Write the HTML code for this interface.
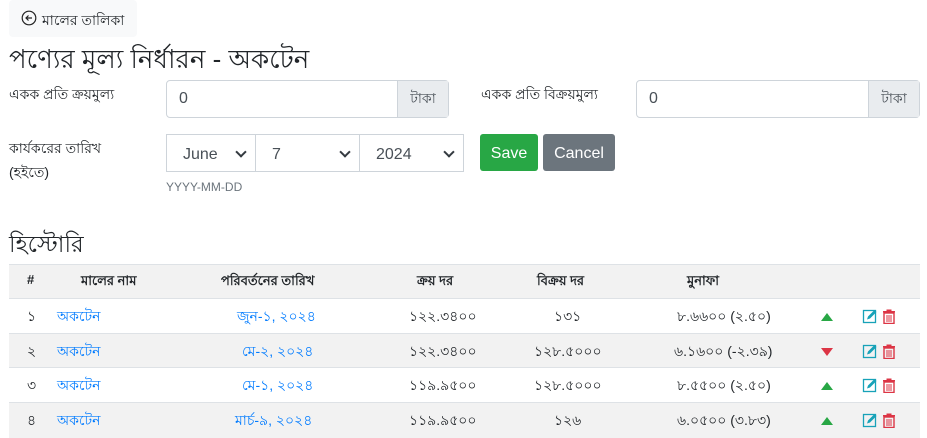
<!DOCTYPE html>
<html><head><meta charset="utf-8"><style>
body{margin:0;width:927px;height:437px;background:#fff;font-family:"Liberation Sans","Noto Sans CJK SC",sans-serif;color:#212529;position:relative;overflow:hidden}
.a{position:absolute;white-space:nowrap}
.back{left:9px;top:0;width:128px;height:37px;background:#f8f9fa;border-radius:4px}
.box{position:absolute;border:1px solid #ced4da;border-radius:4px;background:#fff;box-sizing:border-box;font-size:16px;color:#495057}
.addon{position:absolute;background:#e9ecef;border-left:1px solid #ced4da;top:0;bottom:0;right:0;font-size:14px;display:flex;align-items:center;justify-content:center}
.sel{position:absolute;border:1px solid #ced4da;box-sizing:border-box;height:38px;top:134px;font-size:16px;color:#495057;padding:11px 0 0 16px}
.sel:after{content:"";position:absolute;right:10px;top:13px;width:6px;height:6px;border-right:2px solid #343a40;border-bottom:2px solid #343a40;transform:rotate(45deg)}
.row{position:absolute;left:9px;width:911px;border-top:1px solid #dee2e6;font-size:14px}
.row div{position:absolute;top:6px;white-space:nowrap}
.blue{color:#007bff}
.up{width:0;height:0;border-left:6px solid transparent;border-right:6px solid transparent;border-bottom:8px solid #28a745;top:14px!important;left:812px}
.dn{width:0;height:0;border-left:6px solid transparent;border-right:6px solid transparent;border-top:8px solid #dc3545;top:14px!important;left:812px}
.ic{left:853px;top:9px!important}
</style></head><body>
<div class="a back"></div>
<svg class="a" style="left:21px;top:10px" width="16" height="16" viewBox="0 0 16 16"><circle cx="8" cy="8" r="6.8" fill="none" stroke="#222" stroke-width="1.2"/><path d="M11 8H5M7.5 5.5L5 8l2.5 2.5" fill="none" stroke="#222" stroke-width="1.2"/></svg>
<div class="a" style="left:42px;top:9px;font-size:14px">মালের তালিকা</div>
<div class="a" style="left:9px;top:39px;font-size:26px">পণ্যের মূল্য নির্ধারন - অকটেন</div>
<div class="a" style="left:9px;top:83px;font-size:14px">একক প্রতি ক্রয়মুল্য</div>
<div class="box" style="left:166px;top:80px;width:283px;height:38px"><span style="position:absolute;left:12px;top:9px">0</span><div class="addon" style="width:50px">টাকা</div></div>
<div class="a" style="left:481px;top:83px;font-size:14px">একক প্রতি বিক্রয়মুল্য</div>
<div class="box" style="left:636px;top:80px;width:284px;height:38px"><span style="position:absolute;left:12px;top:9px">0</span><div class="addon" style="width:50px">টাকা</div></div>
<div class="a" style="left:9px;top:136px;font-size:14px;line-height:24px">কার্যকরের তারিখ<br>(হইতে)</div>
<div class="sel" style="left:166px;width:90px">June</div>
<div class="sel" style="left:255px;width:105px;padding-left:16px">7</div>
<div class="sel" style="left:359px;width:105px">2024</div>
<div class="a" style="left:166px;top:180px;font-size:12px;color:#6c757d">YYYY-MM-DD</div>
<div class="a" style="left:480px;top:134px;width:58px;height:37px;background:#28a745;border-radius:3px;color:#fff;font-size:16px;text-align:center;line-height:39px">Save</div>
<div class="a" style="left:543px;top:134px;width:72px;height:37px;background:#6c757d;border-radius:3px;color:#fff;font-size:16px;text-align:center;line-height:39px">Cancel</div>
<div class="a" style="left:9px;top:226px;font-size:23px">হিস্টোরি</div>
<div class="a" style="left:9px;top:264px;width:911px;height:34px;background:#f2f2f2;border-top:1px solid #dee2e6"></div>
<div class="row" style="top:264px;border:none;font-weight:bold;font-size:13px">
<div style="left:18px;top:8px">#</div><div style="left:72px;top:8px">মালের নাম</div><div style="left:212px;top:8px">পরিবর্তনের তারিখ</div><div style="left:408px;top:8px">ক্রয় দর</div><div style="left:528px;top:8px">বিক্রয় দর</div><div style="left:678px;top:8px">মুনাফা</div></div>
<svg width="0" height="0" style="position:absolute"><defs>
<symbol id="ed" viewBox="0 0 16 16"><rect x="1.5" y="2.5" width="12" height="12" fill="none" stroke="#17a2b8" stroke-width="1.3"/><path d="M5 11.5l1-3 6.5-6.5 2 2L8 10.5z" fill="#17a2b8"/></symbol>
<symbol id="tr" viewBox="0 0 16 16"><path d="M5.5 1.5h5v1.5h3.5v1.5H2V3h3.5z" fill="#dc3545"/><rect x="3" y="5" width="10" height="10.5" fill="none" stroke="#dc3545" stroke-width="1.4"/><path d="M6 7v7M8 7v7M10 7v7" stroke="#dc3545" stroke-width="1"/></symbol></defs></svg>
<div class="row" style="top:298px;height:35px;background:#fff"><div style="left:18px">১</div><div class="blue" style="left:48px">অকটেন</div><div class="blue" style="left:228px">জুন-১, ২০২৪</div><div style="left:400px">১২২.৩৪০০</div><div style="left:545px">১৩১</div><div style="left:668px">৮.৬৬০০ (২.৫০)</div><div class="up"></div><div class="ic"><svg width="16" height="16"><use href="#ed"/></svg><svg width="16" height="16" style="margin-left:3px"><use href="#tr"/></svg></div></div>
<div class="row" style="top:333px;height:34px;background:#f2f2f2"><div style="left:18px">২</div><div class="blue" style="left:48px">অকটেন</div><div class="blue" style="left:233px">মে-২, ২০২৪</div><div style="left:400px">১২২.৩৪০০</div><div style="left:525px">১২৮.৫০০০</div><div style="left:665px">৬.১৬০০ (-২.৩৯)</div><div class="dn"></div><div class="ic"><svg width="16" height="16"><use href="#ed"/></svg><svg width="16" height="16" style="margin-left:3px"><use href="#tr"/></svg></div></div>
<div class="row" style="top:367px;height:35px;background:#fff"><div style="left:18px">৩</div><div class="blue" style="left:48px">অকটেন</div><div class="blue" style="left:233px">মে-১, ২০২৪</div><div style="left:400px">১১৯.৯৫০০</div><div style="left:525px">১২৮.৫০০০</div><div style="left:668px">৮.৫৫০০ (২.৫০)</div><div class="up"></div><div class="ic"><svg width="16" height="16"><use href="#ed"/></svg><svg width="16" height="16" style="margin-left:3px"><use href="#tr"/></svg></div></div>
<div class="row" style="top:402px;height:35px;background:#f2f2f2"><div style="left:18px">৪</div><div class="blue" style="left:48px">অকটেন</div><div class="blue" style="left:226px">মার্চ-৯, ২০২৪</div><div style="left:400px">১১৯.৯৫০০</div><div style="left:545px">১২৬</div><div style="left:668px">৬.০৫০০ (৩.৮৩)</div><div class="up"></div><div class="ic"><svg width="16" height="16"><use href="#ed"/></svg><svg width="16" height="16" style="margin-left:3px"><use href="#tr"/></svg></div></div>
</body></html>
